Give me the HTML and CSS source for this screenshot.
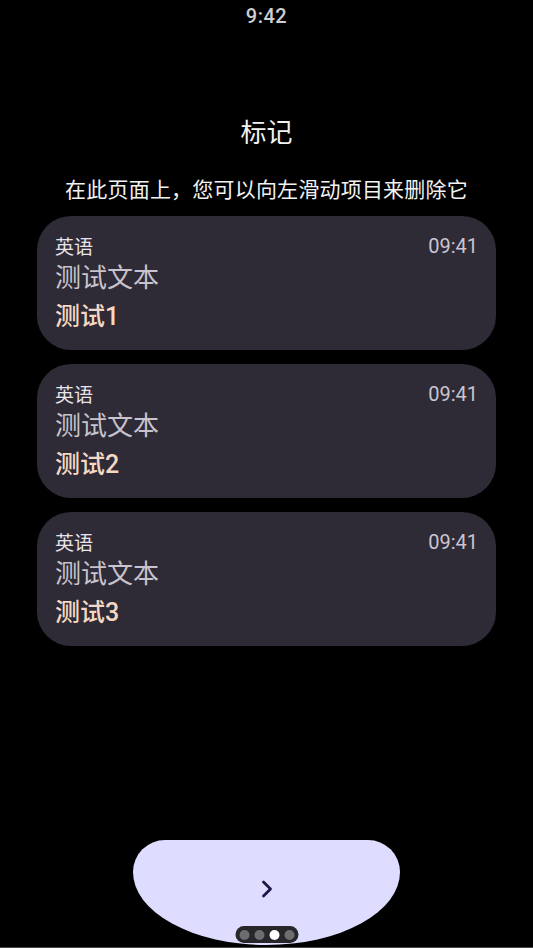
FILE: index.html
```html
<!DOCTYPE html>
<html lang="zh">
<head>
<meta charset="utf-8">
<link rel="stylesheet" href="styles.css">
</head>
<body>
<div class="screen">
  <div class="status">9:42</div>
  <h1 class="title">标记</h1>
  <p class="hint">在此页面上，您可以向左滑动项目来删除它</p>
  <div class="list">
    <div class="card">
      <div class="row"><span class="lang">英语</span><span class="time">09:41</span></div>
      <div class="text">测试文本</div>
      <div class="name">测试1</div>
    </div>
    <div class="card">
      <div class="row"><span class="lang">英语</span><span class="time">09:41</span></div>
      <div class="text">测试文本</div>
      <div class="name">测试2</div>
    </div>
    <div class="card">
      <div class="row"><span class="lang">英语</span><span class="time">09:41</span></div>
      <div class="text">测试文本</div>
      <div class="name">测试3</div>
    </div>
  </div>
  <div class="bottom">
    <div class="next">
      <svg class="chev" width="12" height="18" viewBox="0 0 12 18"><path d="M2.5 2 L9.5 9 L2.5 16" fill="none" stroke="#1d1845" stroke-width="2.8" stroke-linecap="round" stroke-linejoin="round"/></svg>
      <div class="dots">
        <span class="dot"></span><span class="dot"></span><span class="dot on"></span><span class="dot"></span>
      </div>
    </div>
  </div>
</div>
</body>
</html>
```
FILE: styles.css
```css
html, body {
  margin: 0;
  padding: 0;
  background: #000;
}
body {
  font-family: Roboto, "Noto Sans CJK SC", sans-serif;
  color: #fff;
}
.screen {
  width: 533px;
  height: 948px;
  display: flex;
  flex-direction: column;
  box-sizing: border-box;
  border-bottom: 1px solid #4a4a4a;
  overflow: hidden;
}
.status {
  height: 32px;
  line-height: 32px;
  text-align: center;
  font-size: 20px;
  color: #cfcfcf;
  font-weight: 500;
  letter-spacing: 0.5px;
}
.title {
  margin: 83px 0 0;
  line-height: 36px;
  font-size: 26px;
  font-weight: 400;
  text-align: center;
  color: #f2f2f2;
}
.hint {
  margin: 24px 0 0;
  line-height: 30px;
  font-size: 21px;
  letter-spacing: 0.2px;
  text-align: center;
  color: #f2f2f2;
}
.list {
  margin: 11px 37px 0;
  display: flex;
  flex-direction: column;
  gap: 14px;
}
.card {
  background: #2e2b36;
  border-radius: 34px;
  padding: 16px 18px 15px 18px;
  height: 134px;
  box-sizing: border-box;
}
.row {
  display: flex;
  justify-content: space-between;
  align-items: center;
  height: 27px;
}
.lang {
  font-size: 19px;
  color: #e8e3ea;
}
.time {
  font-size: 20px;
  color: #c9c4cf;
}
.text {
  margin-top: 2px;
  font-size: 26px;
  line-height: 34px;
  color: #c8c3cc;
}
.name {
  margin-top: 4px;
  font-size: 25px;
  line-height: 36px;
  font-weight: 500;
  color: #f4d8c4;
}
.bottom {
  margin-top: auto;
  height: 107px;
  display: flex;
  justify-content: center;
}
.next {
  position: relative;
  width: 267px;
  height: 105px;
  background: #dedcff;
  border-radius: 32px 32px 50% 50% / 32px 32px 73px 73px;
  display: flex;
  justify-content: center;
  padding-top: 40px;
  box-sizing: border-box;
}
.chev {
  display: block;
}
.dots {
  position: absolute;
  left: 50%;
  bottom: 2px;
  transform: translateX(-50%);
  background: #27272b;
  border-radius: 9px;
  height: 17px;
  padding: 0 4px;
  display: flex;
  align-items: center;
  gap: 5px;
}
.dot {
  width: 10px;
  height: 10px;
  border-radius: 50%;
  background: #6d6d70;
}
.dot.on {
  background: #ffffff;
}
```
